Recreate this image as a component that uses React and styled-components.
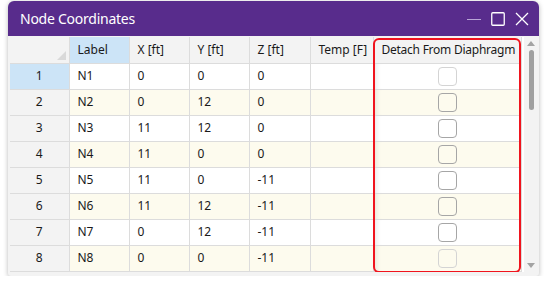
import React from "react";
import styled, { createGlobalStyle } from "styled-components";

const GlobalStyle = createGlobalStyle`
  html, body {
    margin: 0;
    padding: 0;
    background: #ffffff;
    font-family: "Noto Sans", "Open Sans", sans-serif;
  }
`;

const Page = styled.div`
  padding: 1px 0 0 8px;
`;

const Window = styled.div`
  width: 531px;
  height: 275px;
  display: flex;
  flex-direction: column;
  background: #f3f3f3;
  border-radius: 6px 6px 3px 3px;
  box-shadow: 0 1px 5px rgba(0, 0, 0, 0.28);
  overflow: hidden;
`;

const TitleBar = styled.div`
  height: 35px;
  flex: none;
  display: flex;
  align-items: center;
  background: #582c8c;
  color: #ffffff;
  padding: 0 10px 0 12px;
`;

const Title = styled.div`
  flex: 1;
  font-size: 14px;
  letter-spacing: -0.25px;
`;

const WinButtons = styled.div`
  display: flex;
  align-items: center;
  gap: 10px;
`;

const WinButton = styled.svg`
  width: 14px;
  height: 14px;
  display: block;
`;

const Body = styled.div`
  flex: 1;
  display: flex;
  padding: 1px 1px 4px 2px;
  min-height: 0;
`;

const GridWrap = styled.div`
  position: relative;
  flex: 1;
  overflow: hidden;
  background: #ffffff;
`;

const Table = styled.table`
  width: 511px;
  border-collapse: collapse;
  table-layout: fixed;
  font-size: 12px;
  line-height: 16px;
  color: #1a1a1a;
`;

const Row = styled.tr`
  height: 26px;
`;

const HeadCell = styled.th`
  padding: 0 8px;
  font-weight: normal;
  text-align: ${({ $center }) => ($center ? "center" : "left")};
  letter-spacing: ${({ $center }) => ($center ? "-0.25px" : "0")};
  background: ${({ $active }) => ($active ? "#cce4f7" : "#f3f3f3")};
  border-right: 1px solid #dcdcdc;
  border-bottom: 1px solid #dcdcdc;
  white-space: nowrap;
  overflow: hidden;
  position: relative;
`;

const Corner = styled.span`
  position: absolute;
  right: 3px;
  bottom: 3px;
  width: 0;
  height: 0;
  border-left: 9px solid transparent;
  border-bottom: 9px solid #d9d9d9;
`;

const RowHead = styled.td`
  padding: 0;
  text-align: center;
  background: ${({ $active }) => ($active ? "#cce4f7" : "#f3f3f3")};
  border-right: 1px solid #dcdcdc;
  border-bottom: 1px solid #dcdcdc;
`;

const Cell = styled.td`
  padding: 0 8px;
  background: ${({ $alt }) => ($alt ? "#fdfbee" : "#ffffff")};
  border-right: 1px solid #dcdcdc;
  border-bottom: 1px solid #dcdcdc;
  white-space: nowrap;
`;

const CheckCell = styled(Cell)`
  padding: 0;
  text-align: center;
  line-height: 0;
  box-shadow: inset 7px 0 6px -6px rgba(0, 0, 0, 0.14);
`;

const CheckBox = styled.span`
  display: inline-block;
  vertical-align: middle;
  width: 17px;
  height: 17px;
  border: 1px solid ${({ $faded }) => ($faded ? "#d4d4d4" : "#a6a6a6")};
  border-radius: 4px;
  background: transparent;
`;

const Highlight = styled.div`
  position: absolute;
  left: 363px;
  top: 1px;
  width: 148px;
  height: 235px;
  border: 2px solid #f0141e;
  border-radius: 6px;
  box-sizing: border-box;
  pointer-events: none;
`;

const ScrollBar = styled.div`
  width: 14px;
  flex: none;
  display: flex;
  flex-direction: column;
  align-items: center;
  background: #f3f3f3;
  padding: 4px 0 4px;
`;

const Arrow = styled.span`
  width: 0;
  height: 0;
  border-left: 4px solid transparent;
  border-right: 4px solid transparent;
  ${({ $down }) =>
    $down ? "border-top: 5px solid #a3a3a3;" : "border-bottom: 5px solid #a3a3a3;"}
`;

const Track = styled.div`
  flex: 1;
  width: 100%;
  display: flex;
  justify-content: center;
  padding-top: 4px;
`;

const Thumb = styled.div`
  width: 5px;
  height: 60px;
  border-radius: 3px;
  background: #a0a0a0;
`;

const columns = [
  { key: "label", title: "Label", width: 60 },
  { key: "x", title: "X [ft]", width: 60 },
  { key: "y", title: "Y [ft]", width: 60 },
  { key: "z", title: "Z [ft]", width: 61 },
  { key: "temp", title: "Temp [F]", width: 63 },
];

const rows = [
  { label: "N1", x: "0", y: "0", z: "0" },
  { label: "N2", x: "0", y: "12", z: "0" },
  { label: "N3", x: "11", y: "12", z: "0" },
  { label: "N4", x: "11", y: "0", z: "0" },
  { label: "N5", x: "11", y: "0", z: "-11" },
  { label: "N6", x: "11", y: "12", z: "-11" },
  { label: "N7", x: "0", y: "12", z: "-11" },
  { label: "N8", x: "0", y: "0", z: "-11" },
  { label: "", x: "", y: "", z: "" },
];

export default function App() {
  return (
    <>
      <GlobalStyle />
      <Page>
        <Window>
          <TitleBar>
            <Title>Node Coordinates</Title>
            <WinButtons>
              <WinButton viewBox="0 0 14 14">
                <line x1="0" y1="7.5" x2="14" y2="7.5" stroke="#b9a6d6" strokeWidth="1.2" />
              </WinButton>
              <WinButton viewBox="0 0 14 14">
                <rect x="0.75" y="0.75" width="12.5" height="12.5" rx="1" fill="none" stroke="#fff" strokeWidth="1.3" />
              </WinButton>
              <WinButton viewBox="0 0 14 14">
                <path d="M1 1 L13 13 M13 1 L1 13" stroke="#fff" strokeWidth="1.3" />
              </WinButton>
            </WinButtons>
          </TitleBar>
          <Body>
            <GridWrap>
              <Table>
                <colgroup>
                  <col style={{ width: 59 }} />
                  {columns.map((c) => (
                    <col key={c.key} style={{ width: c.width }} />
                  ))}
                  <col style={{ width: 148 }} />
                </colgroup>
                <thead>
                  <Row>
                    <HeadCell>
                      <Corner />
                    </HeadCell>
                    {columns.map((c) => (
                      <HeadCell key={c.key} $active={c.key === "label"}>
                        {c.title}
                      </HeadCell>
                    ))}
                    <HeadCell $center>Detach From Diaphragm</HeadCell>
                  </Row>
                </thead>
                <tbody>
                  {rows.map((r, i) => {
                    const alt = i % 2 === 1;
                    const last = i === rows.length - 1;
                    return (
                      <Row key={i}>
                        <RowHead $active={i === 0}>{last ? "" : i + 1}</RowHead>
                        <Cell $alt={alt}>{r.label}</Cell>
                        <Cell $alt={alt}>{r.x}</Cell>
                        <Cell $alt={alt}>{r.y}</Cell>
                        <Cell $alt={alt}>{r.z}</Cell>
                        <Cell $alt={alt} />
                        <CheckCell $alt={alt}>
                          {!last && <CheckBox $faded={i === 0 || i >= 7} />}
                        </CheckCell>
                      </Row>
                    );
                  })}
                </tbody>
              </Table>
              <Highlight />
            </GridWrap>
            <ScrollBar>
              <Arrow />
              <Track>
                <Thumb />
              </Track>
              <Arrow $down />
            </ScrollBar>
          </Body>
        </Window>
      </Page>
    </>
  );
}
